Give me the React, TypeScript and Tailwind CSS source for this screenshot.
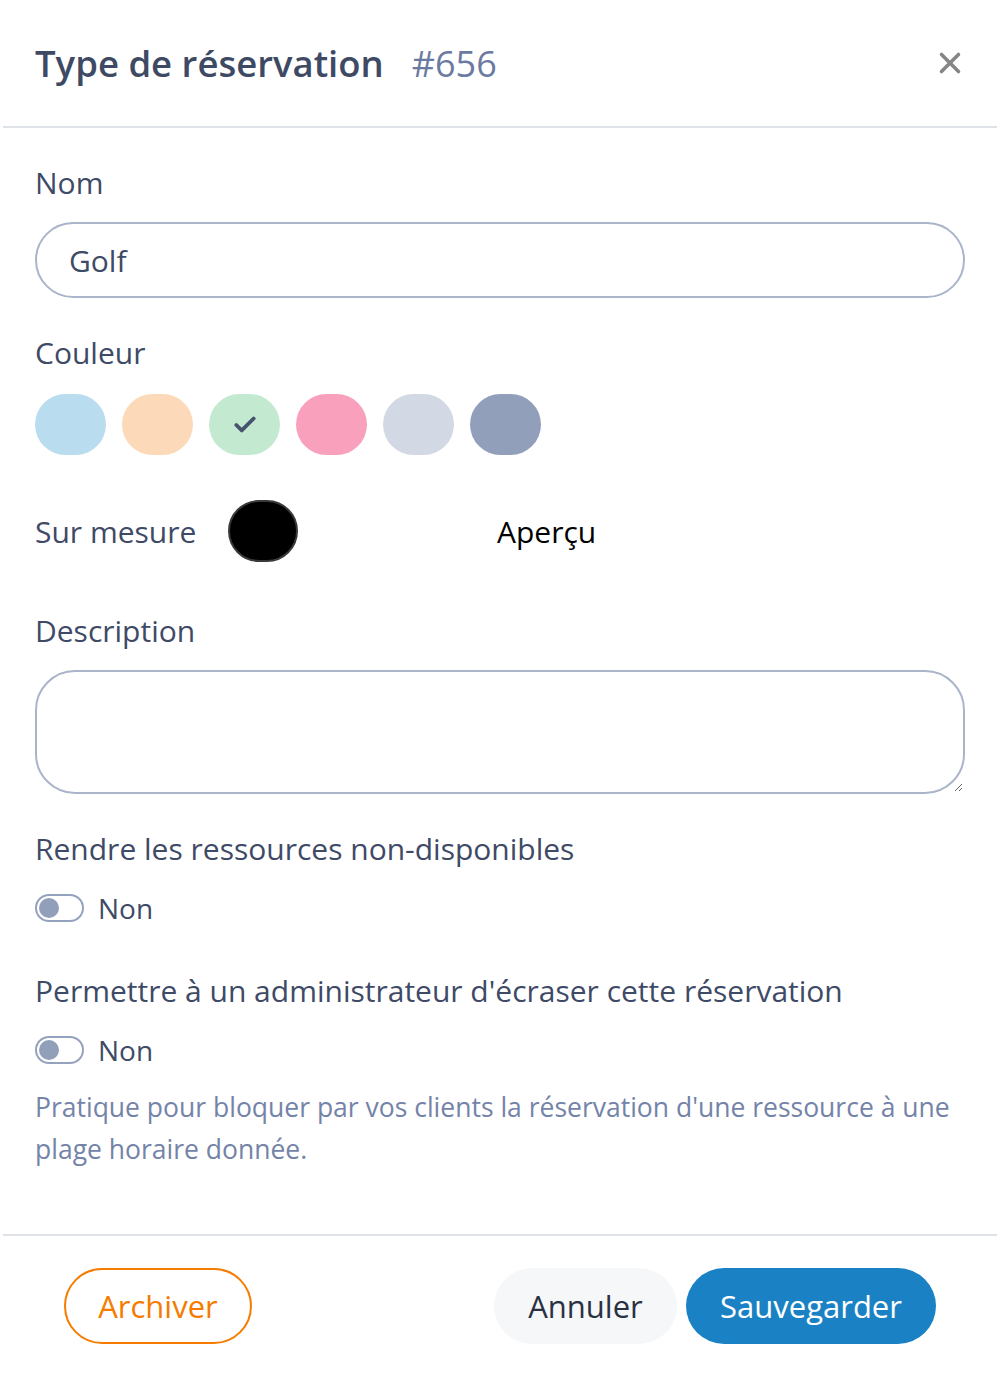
import { X, Check } from "lucide-react"

function Toggle() {
  return (
    <div className="flex items-center gap-[14px] h-[30px]">
      <div className="w-[49px] h-[28px] rounded-full border-2 border-[#95a2bd] flex items-center px-[2px]">
        <div className="w-[20px] h-[20px] rounded-full bg-[#919fba]" />
      </div>
      <span className="text-[28px] text-[#3e4a66]">Non</span>
    </div>
  )
}

function App() {
  const colors = ["#b9dcee", "#fcd9b8", "#c3ead0", "#f9a0bd", "#d2d8e4", "#919fba"]

  return (
    <div className="w-[1000px] h-[1379px] bg-white font-['Open_Sans',sans-serif] text-[#3e4a66] flex flex-col">
      <header className="h-[128px] mx-[3px] border-b-2 border-[#dfe3e8] flex items-center justify-between pl-[32px] pr-[30px]">
        <div className="flex items-baseline gap-[28px]">
          <h2 className="text-[36.5px] font-semibold text-[#3e4a64]">Type de réservation</h2>
          <span className="text-[36px] text-[#6b7aa0]">#656</span>
        </div>
        <X className="w-[34px] h-[34px] text-[#858585]" strokeWidth={2.5} />
      </header>

      <div className="flex-1 px-[35px]">
        <label className="block mt-[37px] text-[30px] leading-[36px]">Nom</label>
        <div className="mt-[21px] h-[76px] rounded-full border-2 border-[#aab5ca] flex items-center px-[32px] text-[30px] text-[#3e4a66] w-[930px]">
          Golf
        </div>

        <label className="block mt-[37px] text-[30px] leading-[36px]">Couleur</label>
        <div className="mt-[23px] flex gap-[16px]">
          {colors.map((c, i) => (
            <div
              key={c}
              className="w-[71px] h-[61px] rounded-full flex items-center justify-center"
              style={{ backgroundColor: c }}
            >
              {i === 2 && <Check className="w-[26px] h-[26px] text-[#46526e]" strokeWidth={3.5} />}
            </div>
          ))}
        </div>

        <div className="mt-[45px] flex items-center h-[62px]">
          <span className="text-[30px] w-[193px]">Sur mesure</span>
          <div className="w-[70px] h-[62px] rounded-full bg-black border-2 border-[#3a3a3a]" />
          <span className="ml-[199px] text-[30px] text-black">Aperçu</span>
        </div>

        <label className="block mt-[51px] text-[30px] leading-[36px]">Description</label>
        <textarea className="mt-[21px] w-[930px] h-[124px] rounded-[40px] border-2 border-[#aab5ca] block" />

        <p className="mt-[37px] text-[30px] leading-[36px]">Rendre les ressources non-disponibles</p>
        <div className="mt-[26px]">
          <Toggle />
        </div>

        <p className="mt-[50px] text-[30px] leading-[36px]">Permettre à un administrateur d'écraser cette réservation</p>
        <div className="mt-[26px]">
          <Toggle />
        </div>

        <p className="mt-[21px] text-[26.5px] leading-[42px] text-[#7483a8] w-[930px]">
          Pratique pour bloquer par vos clients la réservation d'une ressource à une plage horaire donnée.
        </p>
      </div>

      <footer className="mx-[3px] border-t-2 border-[#dfe3e8] h-[145px] flex items-start justify-between pt-[32px] pl-[61px] pr-[61px]">
        <button className="h-[76px] w-[188px] rounded-full border-2 border-[#f57c00] text-[#f57c00] text-[31px]">
          Archiver
        </button>
        <div className="flex gap-[9px]">
          <button className="h-[76px] w-[183px] rounded-full bg-[#f6f7f9] text-[#2a3142] text-[31px]">
            Annuler
          </button>
          <button className="h-[76px] w-[250px] rounded-full bg-[#1a82c4] text-white text-[31px]">
            Sauvegarder
          </button>
        </div>
      </footer>
    </div>
  )
}

export default App
